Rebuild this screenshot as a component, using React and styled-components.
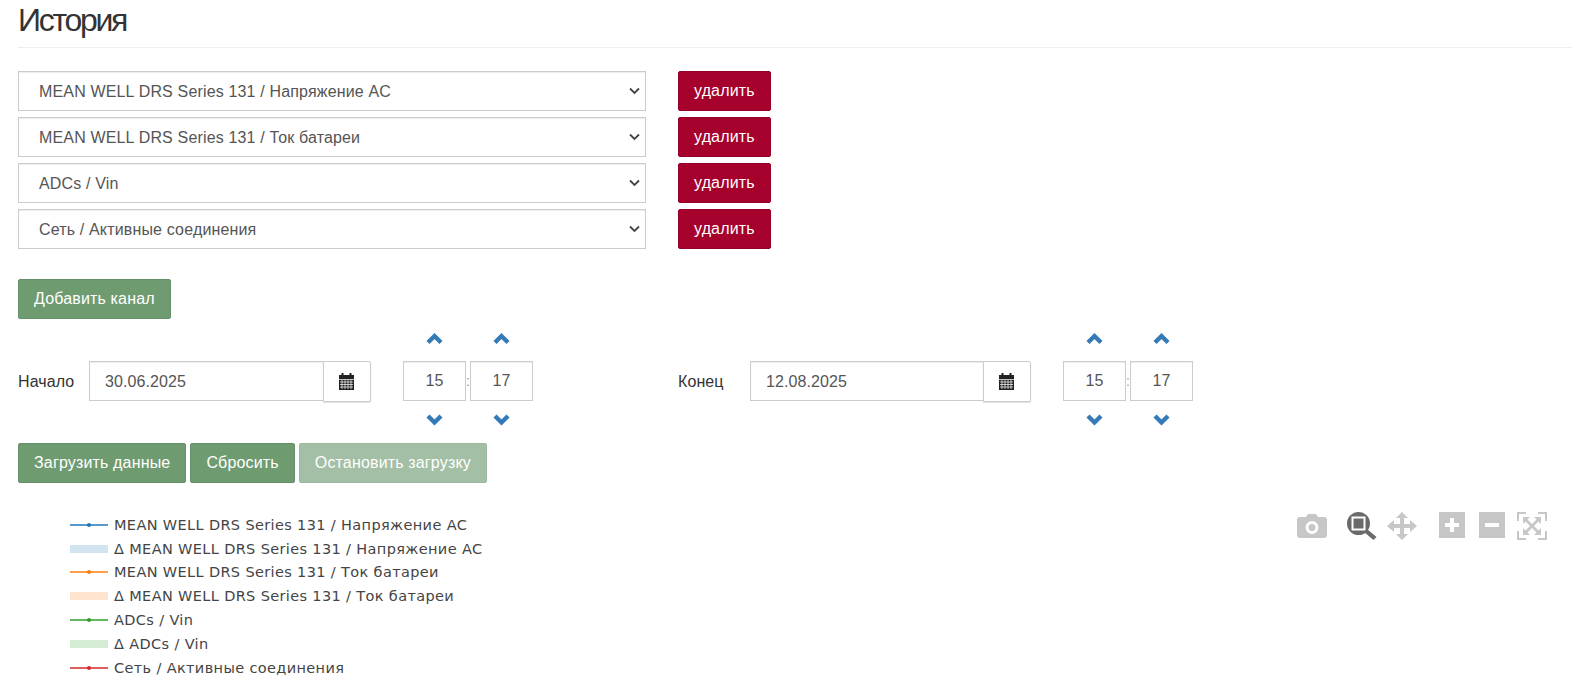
import React from 'react';
import styled, { createGlobalStyle } from 'styled-components';

const GlobalStyle = createGlobalStyle`
    html, body {
        margin: 0;
        padding: 0;
        background: #fff;
        overflow: hidden;
    }
    body {
        font-family: "Liberation Sans", Arial, sans-serif;
        font-size: 16px;
        color: #333;
    }
    * {
        box-sizing: border-box;
    }
`

const Page = styled.div`
    padding: 0 23px 0 18px;
`

const PageHeader = styled.div`
    height: 48px;
    border-bottom: 1px solid #eee;
    margin-bottom: 23px;
`

const Title = styled.h1`
    margin: 0;
    padding-top: 4px;
    font-size: 32px;
    font-weight: 400;
    line-height: 33px;
    letter-spacing: -2.3px;
    color: #333;
`

const ChannelList = styled.div`
    display: flex;
    flex-direction: column;
    gap: 6px;
    margin-bottom: 30px;
`

const ChannelRow = styled.div`
    display: flex;
    gap: 32px;
`

const SelectWrap = styled.div`
    position: relative;
    width: 628px;
    height: 40px;
`

const ChannelSelect = styled.select`
    appearance: none;
    width: 100%;
    height: 40px;
    padding: 0 30px 0 20px;
    background: #fff;
    border: 1px solid #ccc;
    border-radius: 0;
    color: #555;
    font-family: inherit;
    font-size: 16px;
    letter-spacing: 0.16px;
    box-shadow: inset 0 1px 1px rgba(0, 0, 0, 0.075);
`

const SelectChevron = styled.svg`
    position: absolute;
    top: 16px;
    right: 6px;
    width: 11px;
    height: 8px;
    pointer-events: none;
`

const Button = styled.button`
    height: 40px;
    padding: 0 15px;
    border: 1px solid ${props => props.$danger ? '#95002a' : '#64906a'};
    border-radius: 2px;
    background: ${props => props.$danger ? '#a6002c' : '#6f9b71'};
    color: #fff;
    font-family: inherit;
    font-size: 16px;
    letter-spacing: 0.16px;
    opacity: ${props => props.$disabled ? 0.63 : 1};
`

const DateRow = styled.div`
    display: flex;
    padding: 13px 0 17px;
`

const DateGroup = styled.div`
    display: flex;
    width: 660px;
`

const DateField = styled.div`
    display: flex;
    align-items: center;
    margin-top: 29px;
    height: 40px;
`

const DateLabel = styled.label`
    width: ${props => props.$width}px;
    padding-top: 2px;
    line-height: 38px;
    letter-spacing: 0.1px;
    color: #333;
`

const DateInput = styled.input`
    width: ${props => props.$width}px;
    height: 40px;
    padding: 2px 15px 0;
    border: 1px solid #ccc;
    border-right: none;
    color: #555;
    font-family: inherit;
    font-size: 16px;
    letter-spacing: 0.1px;
    box-shadow: inset 0 1px 1px rgba(0, 0, 0, 0.075);
`

const CalendarButton = styled.span`
    display: flex;
    align-items: center;
    justify-content: center;
    align-self: flex-start;
    width: 48px;
    height: 41px;
    padding-right: 2px;
    background: #fff;
    border: 1px solid #ccc;
    border-radius: 0 2px 2px 0;
    box-shadow: 0 1px 1px rgba(0, 0, 0, 0.12);
`

const TimeGroup = styled.div`
    display: flex;
    margin-left: 32px;
`

const TimeColumn = styled.div`
    display: flex;
    flex-direction: column;
    align-items: center;
    width: 63px;
`

const TimeArrow = styled.svg`
    display: block;
    width: 17px;
    height: 14px;
    margin: ${props => props.$down ? '11px 0 0' : '0 0 15px'};
`

const TimeInput = styled.input`
    width: 63px;
    height: 40px;
    padding: 0;
    border: 1px solid #ccc;
    color: #555;
    font-family: inherit;
    font-size: 16px;
    letter-spacing: 0.1px;
    text-align: center;
    box-shadow: inset 0 1px 1px rgba(0, 0, 0, 0.075);
`

const TimeColon = styled.span`
    width: 4px;
    margin-top: 29px;
    line-height: 40px;
    font-size: 14px;
    color: #999;
    text-align: center;
`

const ActionRow = styled.div`
    display: flex;
    gap: 4px;
`

const ChartHead = styled.div`
    display: flex;
    justify-content: space-between;
    align-items: flex-start;
    padding: 29px 25px 0 52px;
`

const Legend = styled.div`
    display: flex;
    flex-direction: column;
    margin-top: 1px;
`

const LegendItem = styled.div`
    display: flex;
    align-items: center;
    gap: 6px;
    height: 23.8px;
    font-family: "DejaVu Sans", Verdana, sans-serif;
    font-size: 14.5px;
    letter-spacing: 0.36px;
    color: #444;
    white-space: nowrap;
`

const Swatch = styled.svg`
    display: block;
    width: 38px;
    height: 10px;
`

const ModeBar = styled.div`
    display: flex;
    align-items: flex-start;
`

const ModeIcon = styled.svg`
    display: block;
    width: ${props => props.$w}px;
    height: 28px;
    margin-left: ${props => props.$gap}px;
    fill: ${props => props.$active ? '#6a6a6a' : '#c7c7c7'};
`

const channels = [
    'MEAN WELL DRS Series 131 / Напряжение AC',
    'MEAN WELL DRS Series 131 / Ток батареи',
    'ADCs / Vin',
    'Сеть / Активные соединения',
]

const legend = [
    { name: 'MEAN WELL DRS Series 131 / Напряжение AC', color: '#1f77b4' },
    { name: 'Δ MEAN WELL DRS Series 131 / Напряжение AC', color: '#1f77b4', band: true },
    { name: 'MEAN WELL DRS Series 131 / Ток батареи', color: '#ff7f0e' },
    { name: 'Δ MEAN WELL DRS Series 131 / Ток батареи', color: '#ff7f0e', band: true },
    { name: 'ADCs / Vin', color: '#2ca02c' },
    { name: 'Δ ADCs / Vin', color: '#2ca02c', band: true },
    { name: 'Сеть / Активные соединения', color: '#d62728' },
]

const CalendarIcon = () => (
    <svg width="15" height="17" viewBox="0 0 15 17">
        <path fill="#222" d="M0 2h2.500V0h2v2h6V0h2v2H15v15H0z" />
        <path
            stroke="#fff"
            strokeWidth="0.7"
            d="M0 6.500h15M1 9h13M1 11.500h13M1 14h13M3 6.500v9.500M6 6.500v9.500M9 6.500v9.500M12 6.500v9.500"
        />
    </svg>
)

const Arrow = ({ down }) => (
    <TimeArrow $down={down} viewBox="0 0 17 14">
        <path
            fill="none"
            stroke="#337ab7"
            strokeWidth="4.4"
            d={down ? 'M2 4l6.500 6.500L15 4' : 'M2 10.500L8.500 4l6.500 6.500'}
        />
    </TimeArrow>
)

const TimeSpinner = ({ value }) => (
    <TimeColumn>
        <Arrow />
        <TimeInput defaultValue={value} />
        <Arrow down />
    </TimeColumn>
)

const DatePicker = ({ label, labelWidth, dateWidth, date }) => (
    <DateGroup>
        <DateField>
            <DateLabel $width={labelWidth}>{label}</DateLabel>
            <DateInput $width={dateWidth} defaultValue={date} />
            <CalendarButton><CalendarIcon /></CalendarButton>
        </DateField>
        <TimeGroup>
            <TimeSpinner value="15" />
            <TimeColon>:</TimeColon>
            <TimeSpinner value="17" />
        </TimeGroup>
    </DateGroup>
)

const LegendSwatch = ({ color, band }) => (
    <Swatch viewBox="0 0 38 10">
        {band
            ? <rect x="0" y="1" width="38" height="8" fill={color} opacity="0.2" />
            : (
                <>
                    <line x1="0" y1="5" x2="38" y2="5" stroke={color} strokeWidth="1.5" />
                    <circle cx="19" cy="5" r="2" fill={color} />
                </>
            )}
    </Swatch>
)

const ChartTools = () => (
    <ModeBar>
        <ModeIcon $w={30} $gap={0} viewBox="0 0 30 28">
            <path
                fillRule="evenodd"
                d="M3 5h6l2-3h8l2 3h6a3 3 0 0 1 3 3v15a3 3 0 0 1-3 3H3a3 3 0 0 1-3-3V8a3 3 0 0 1 3-3zM15 9a6.500 6.500 0 1 0 0 13 6.500 6.500 0 0 0 0-13zm0 3a3.500 3.500 0 1 1 0 7 3.500 3.500 0 0 1 0-7z"
            />
        </ModeIcon>
        <ModeIcon $w={31} $gap={20} $active viewBox="0 0 31 28">
            <path
                fillRule="evenodd"
                d="M11.500 0a11.500 11.500 0 1 1 0 23 11.500 11.500 0 0 1 0-23zM4.500 4.500v14h14v-14zm2 2h10v10h-10z"
            />
            <path d="M17 20l3-3 9.500 8-3 3z" />
        </ModeIcon>
        <ModeIcon $w={30} $gap={9} viewBox="0 0 30 28">
            <path d="M15 0l6 6h-4v6h6V8l7 6-7 6v-4h-6v6h4l-6 6-6-6h4v-6H7v4l-7-6 7-6v4h6V6H9z" />
        </ModeIcon>
        <ModeIcon $w={26} $gap={22} viewBox="0 0 26 28">
            <path
                fillRule="evenodd"
                d="M0 0h26v26H0zM11 6v5H6v4h5v5h4v-5h5v-4h-5V6z"
            />
        </ModeIcon>
        <ModeIcon $w={26} $gap={14} viewBox="0 0 26 28">
            <path fillRule="evenodd" d="M0 0h26v26H0zM6 11v4h14v-4z" />
        </ModeIcon>
        <ModeIcon $w={30} $gap={12} viewBox="0 0 30 28">
            <path d="M0 0h9v2H2v7H0zM21 0h9v9h-2V2h-7zM0 19h2v7h7v2H0zM28 19h2v9h-9v-2h7z" />
            <path d="M6 5h7l-2.500 2.500L15 12l4.500-4.500L17 5h7v7l-2.500-2.500L17 14l4.500 4.500L24 16v7h-7l2.500-2.500L15 16l-4.500 4.500L13 23H6v-7l2.500 2.500L13 14 8.500 9.500 6 12z" />
        </ModeIcon>
    </ModeBar>
)

export default function App() {
    return (
        <Page>
            <GlobalStyle />
            <PageHeader>
                <Title>История</Title>
            </PageHeader>
            <ChannelList>
                {channels.map(name => (
                    <ChannelRow key={name}>
                        <SelectWrap>
                            <ChannelSelect defaultValue={name}>
                                {channels.map(option => <option key={option}>{option}</option>)}
                            </ChannelSelect>
                            <SelectChevron viewBox="0 0 11 8">
                                <path d="M1 1.500l4.500 4.500L10 1.500" fill="none" stroke="#444" strokeWidth="1.8" />
                            </SelectChevron>
                        </SelectWrap>
                        <Button $danger>удалить</Button>
                    </ChannelRow>
                ))}
            </ChannelList>
            <Button>Добавить канал</Button>
            <DateRow>
                <DatePicker label="Начало" labelWidth={71} dateWidth={234} date="30.06.2025" />
                <DatePicker label="Конец" labelWidth={72} dateWidth={233} date="12.08.2025" />
            </DateRow>
            <ActionRow>
                <Button>Загрузить данные</Button>
                <Button>Сбросить</Button>
                <Button $disabled>Остановить загрузку</Button>
            </ActionRow>
            <ChartHead>
                <Legend>
                    {legend.map(item => (
                        <LegendItem key={item.name}>
                            <LegendSwatch color={item.color} band={item.band} />
                            {item.name}
                        </LegendItem>
                    ))}
                </Legend>
                <ChartTools />
            </ChartHead>
        </Page>
    );
}
